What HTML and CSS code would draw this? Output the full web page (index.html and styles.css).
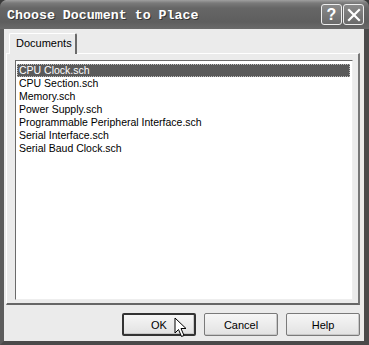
FILE: index.html
```html
<!DOCTYPE html>
<html>
<head>
<meta charset="utf-8">
<link rel="stylesheet" href="styles.css">
</head>
<body>
<div class="window">
  <div class="titlebar">
    <span class="title">Choose Document to Place</span>
    <div class="tbtns">
      <div class="tbtn">?</div>
      <div class="tbtn close">
        <svg width="14" height="14" viewBox="0 0 14 14"><path d="M2 2 L12 12 M12 2 L2 12" stroke="#fff" stroke-width="2.2" stroke-linecap="square"/></svg>
      </div>
    </div>
  </div>
  <div class="client">
    <div class="tabs"><div class="tab">Documents</div></div>
    <div class="panel">
      <div class="listbox">
        <div class="item selected">CPU Clock.sch</div>
        <div class="item">CPU Section.sch</div>
        <div class="item">Memory.sch</div>
        <div class="item">Power Supply.sch</div>
        <div class="item">Programmable Peripheral Interface.sch</div>
        <div class="item">Serial Interface.sch</div>
        <div class="item">Serial Baud Clock.sch</div>
      </div>
    </div>
    <div class="buttons">
      <div class="btn default">OK
        <svg class="cursor" width="14" height="21" viewBox="0 0 14 21"><path d="M1 1 L1 16 L4.5 12.5 L7.5 19.5 L10 18.5 L7 11.5 L12 11.5 Z" fill="#fff" stroke="#000" stroke-width="1" stroke-linejoin="miter"/></svg>
      </div>
      <div class="btn">Cancel</div>
      <div class="btn">Help</div>
    </div>
  </div>
</div>
</body>
</html>
```
FILE: styles.css
```css
* { box-sizing: border-box; }
html, body { margin: 0; padding: 0; background: #3a3a3a; }
.window {
  width: 369px; height: 345px;
  background: #ebebeb;
  border-left: 4px solid #5c5c5c;
  border-right: 5px solid #4a4a4a;
  border-bottom: 4px solid #4a4a4a;
  border-radius: 7px 7px 0 0;
  display: flex; flex-direction: column;
  font-family: "Liberation Sans", Arial, sans-serif;
  font-size: 11px; color: #000;
}
.titlebar {
  height: 29px;
  margin: 0 -5px 0 -4px;
  border-radius: 7px 7px 0 0;
  background: linear-gradient(#a0a0a0 0, #7a7a7a 3px, #666 8px, #5e5e5e 22px, #6a6a6a 29px);
  display: flex; align-items: center; justify-content: space-between;
  padding: 0 5px 0 7px;
}
.title {
  font-family: "Liberation Mono", "Courier New", monospace;
  font-weight: bold; font-size: 13.3px; color: #fff;
  text-shadow: 1px 1px 0 #333;
  margin-top: 1px;
}
.tbtns { display: flex; gap: 1px; }
.tbtn {
  width: 21px; height: 21px;
  border: 1px solid #eee; border-radius: 3px;
  background: linear-gradient(#8a8a8a, #6a6a6a);
  color: #fff; font-weight: bold; font-size: 16px;
  display: flex; align-items: center; justify-content: center;
  font-family: "Liberation Sans", Arial, sans-serif;
}
.client {
  flex: 1; display: flex; flex-direction: column;
  padding: 4px 4px 0 2px;
}
.tabs { display: flex; padding-left: 3px; height: 20px; position: relative; z-index: 1; }
.tab {
  width: 68px; height: 21px;
  background: #ebebeb;
  border-left: 1px solid #fff; border-top: 1px solid #fff;
  border-right: 2px solid #6a6a6a;
  border-radius: 2px 2px 0 0;
  padding: 3px 0 0 6px;
  font-size: 11px;
}
.panel {
  height: 252px;
  border-left: 1px solid #fff; border-top: 1px solid #fff;
  border-right: 2px solid #777; border-bottom: 2px solid #666;
  padding: 6px 5px 3px 8px;
  display: flex;
}
.listbox {
  flex: 1;
  background: #fff;
  border-left: 1px solid #6a6a6a; border-top: 1px solid #6a6a6a;
  border-right: 1px solid #eee; border-bottom: 1px solid #eee;
  padding: 3px 2px 0 1px;
  display: flex; flex-direction: column;
}
.item {
  height: 13px; line-height: 13px; padding-left: 2px;
  white-space: nowrap; font-size: 10.5px;
}
.item.selected {
  background: #5a5a5a; color: #fff;
  outline: 1px dotted #bbb; outline-offset: -1px;
}
.buttons {
  display: flex; justify-content: flex-end; gap: 8px;
  margin-top: 8px; padding-right: 0;
}
.btn {
  width: 74px; height: 23px;
  border: 1px solid #7a7a7a;
  border-radius: 2px;
  background: linear-gradient(#f6f6f6, #e2e2e2);
  display: flex; align-items: center; justify-content: center;
  font-size: 11px; position: relative;
  box-shadow: inset -1px -1px 0 #c8c8c8;
}
.btn.default { border: 2px solid #333; }
.cursor { position: absolute; left: 50px; top: 2px; }
```
